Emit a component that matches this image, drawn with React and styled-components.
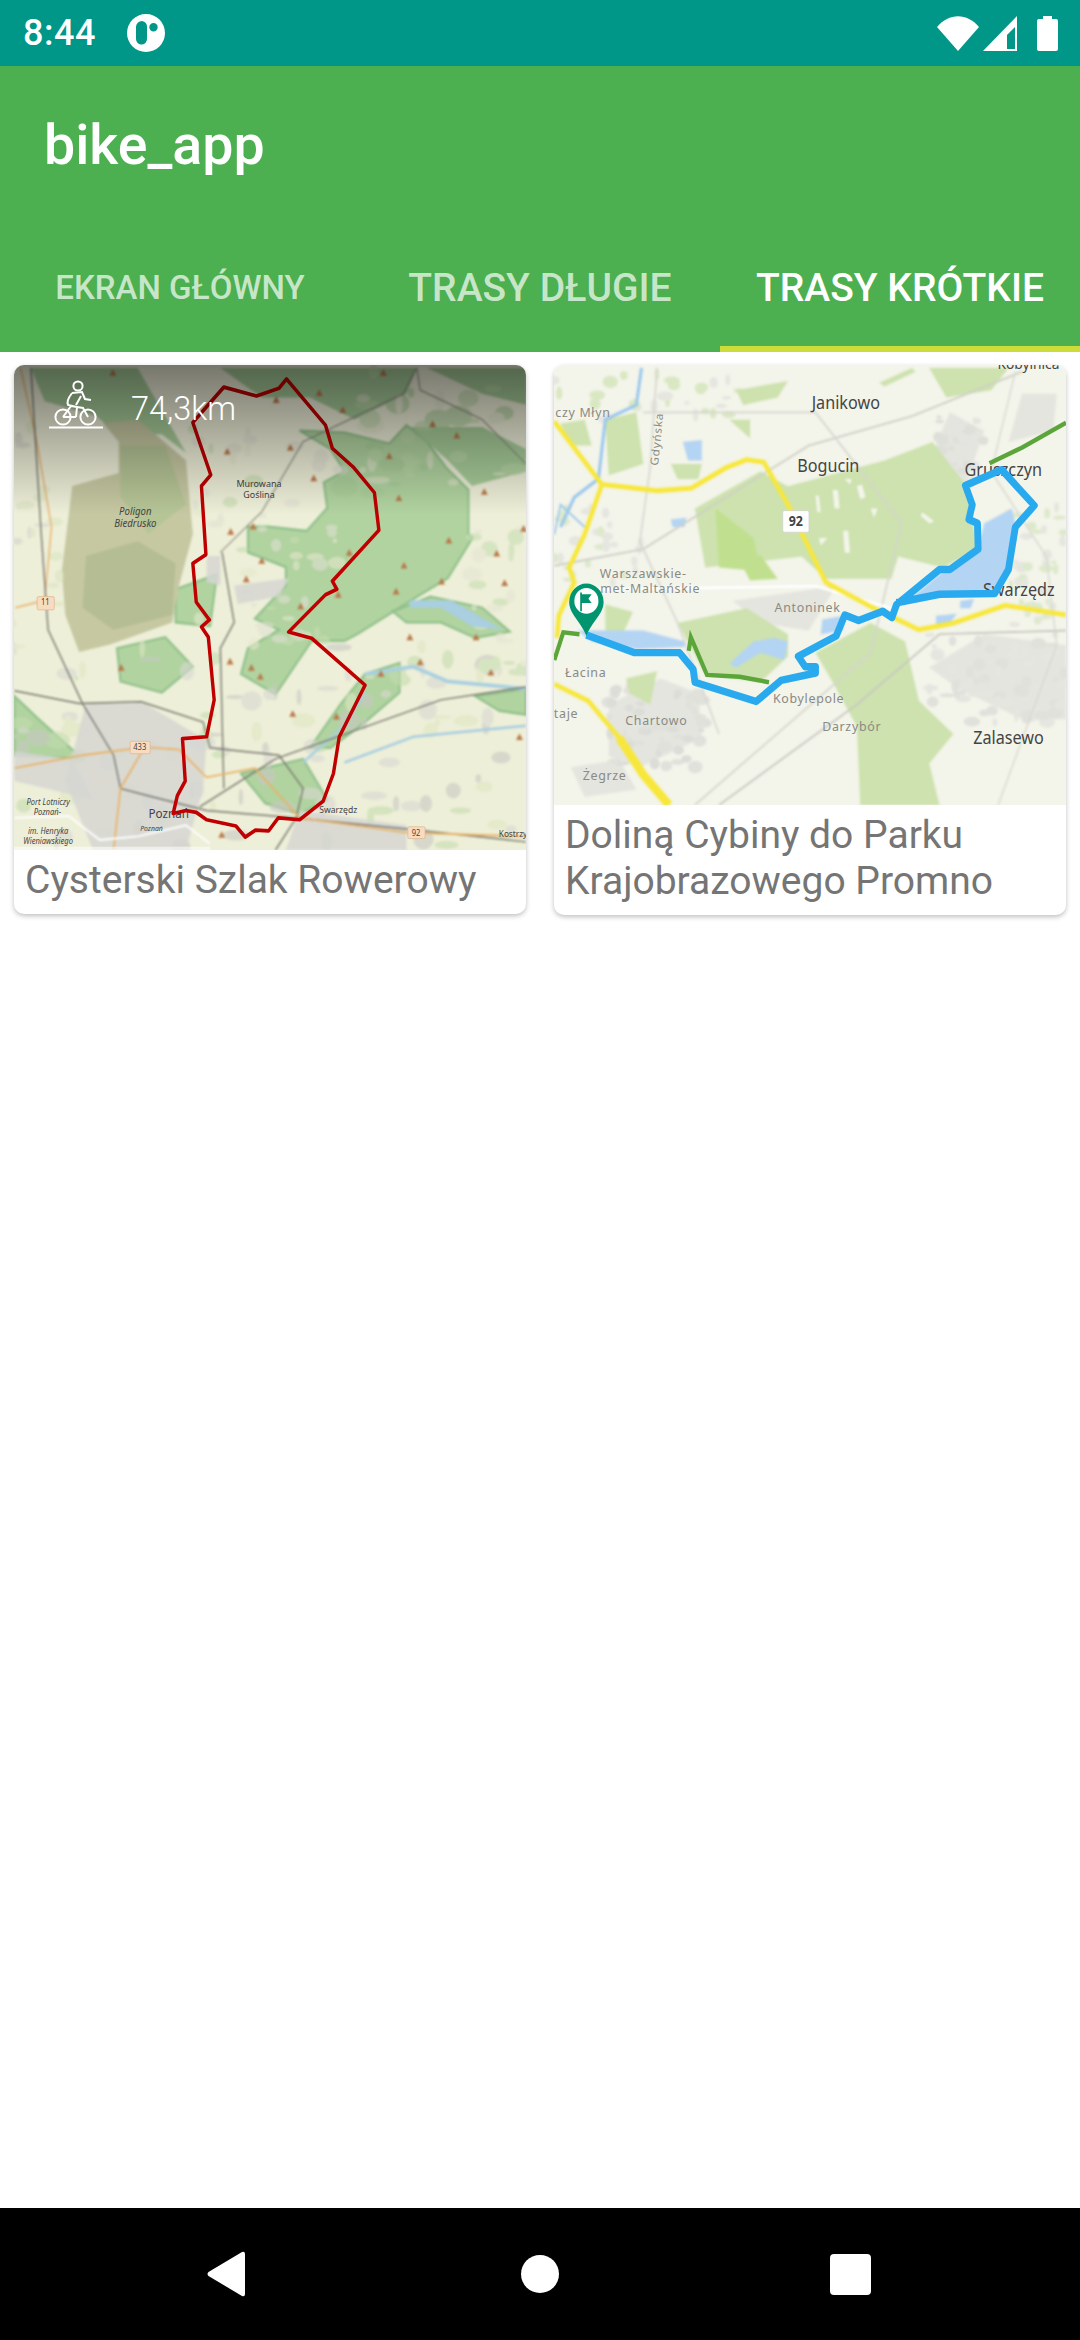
import { createGlobalStyle, styled } from "styled-components";

const GlobalStyle = createGlobalStyle`
    html, body {
        margin: 0;
        padding: 0;
        background: #fff;
        font-family: Roboto, "Liberation Sans", sans-serif;
    }
`;

const TABS = [
    { label: "EKRAN GŁÓWNY", size: 33, color: "rgba(255,255,255,0.7)" },
    { label: "TRASY DŁUGIE", size: 39, color: "rgba(255,255,255,0.7)" },
    { label: "TRASY KRÓTKIE", size: 39, color: "#fff", active: true },
];

// small blobs that give the maps their mottled look
function scatter(seed, count, [x0, y0, x1, y1], colors, maxSize) {
    let s = seed;
    const next = () => {
        s = (s * 16807) % 2147483647;
        return s / 2147483647;
    };
    return Array.from({ length: count }, (_, i) => ({
        id: i,
        cx: x0 + next() * (x1 - x0),
        cy: y0 + next() * (y1 - y0),
        rx: 6 + next() * maxSize,
        ry: 5 + next() * maxSize * 0.7,
        fill: colors[Math.floor(next() * colors.length)],
    }));
}

const BLOBS_1 = [
    ...scatter(11, 110, [41, 800, 1527, 1357], ["#c3dcae", "#d8d8d2", "#dfe6c4", "#c9c9c4"], 32),
    ...scatter(23, 50, [560, 200, 1000, 800], ["#c5ddb0", "#dfe0d2", "#e6e8cc"], 22),
    ...scatter(37, 40, [1000, 60, 1527, 420], ["#bcd8a8", "#e2e4cc", "#a9cd98"], 34),
    ...scatter(41, 26, [1370, 420, 1527, 900], ["#c6deb2", "#e4e4d4"], 24),
    ...scatter(53, 18, [41, 200, 180, 760], ["#dbe4c2", "#d3d3cc"], 20),
];
const BLOBS_2 = [
    ...scatter(7, 70, [1130, 770, 1527, 1010], ["#e6e6e1", "#e1e1dc"], 18),
    ...scatter(17, 50, [200, 900, 480, 1130], ["#e1e1dc", "#dcdcd8"], 18),
    ...scatter(29, 50, [1140, 170, 1290, 380], ["#e4e4e0", "#dfdfda"], 14),
    ...scatter(31, 40, [1360, 420, 1527, 760], ["#e6e6e0", "#dde9cb"], 16),
    ...scatter(43, 30, [42, 420, 300, 640], ["#e6e6e0", "#dde9cb"], 16),
    ...scatter(47, 30, [42, 60, 600, 190], ["#e6e6e0", "#d9e8c2"], 18),
];

const FORESTS_1 = [
    "720,480 780,480 890,492 950,430 940,360 1000,330 960,270 870,220 1000,225 1130,255 1180,205 1240,250 1295,320 1360,380 1360,500 1372,510 1300,620 1220,665 1040,770 1000,790 905,790 800,935 700,880 720,810 810,760 740,730 830,640 830,590 720,550",
    "1140,710 1250,670 1400,700 1480,765 1380,782 1280,740 1180,740",
    "1060,880 1160,850 1160,930 1060,1010 960,1080 900,1080 990,960",
    "42,940 110,1000 240,1110 42,1100",
    "1380,940 1527,920 1527,990 1450,980",
    "700,1150 880,1110 950,1220 870,1260 770,1230",
    "510,650 630,610 610,750 510,740",
    "340,810 480,780 560,860 470,930 350,900",
];
const DARK_1 = [
    "90,50 400,50 540,280 470,230 340,230 280,180 130,140",
    "640,50 1210,50 1180,120 1030,190 900,130 760,130",
    "1190,210 1400,210 1527,270 1527,330 1370,370 1300,300",
    "1240,50 1527,50 1527,150 1400,120",
];
const TOWN_1 = [
    "250,960 420,960 600,1060 590,1190 540,1357 270,1357 190,1170",
    "680,640 840,620 810,670 690,690",
    "600,560 640,560 640,640 600,630",
    "42,1090 210,1110 270,1220 42,1170",
    "870,1250 1180,1290 1180,1357 830,1357",
];
const ROUTE_1 = "560,198 650,102 745,126 810,105 832,80 945,205 965,268 1025,318 1087,388 1100,490 965,628 978,650 945,665 838,766 905,783 1060,910 985,1050 968,1150 938,1225 870,1275 808,1270 780,1305 742,1303 712,1322 685,1292 600,1275 570,1255 540,1250 503,1258 515,1210 538,1170 530,1055 600,1050 622,950 605,780 585,752 608,733 570,685 560,580 598,556 585,370 612,340";
const PEAKS_1 = [
    [328, 62], [802, 136], [927, 117], [995, 163], [1113, 62], [1256, 201], [1326, 232], [660, 276], [843, 265], [1130, 288],
    [911, 348], [1158, 402], [1406, 385], [670, 493], [735, 479], [1303, 517], [1520, 485], [1014, 550], [760, 572], [1173, 585],
    [1442, 552], [715, 622], [1282, 628], [1150, 655], [982, 664], [1465, 632], [873, 695], [1190, 779], [1382, 779], [668, 845],
    [1220, 847], [730, 862], [756, 886], [1106, 878], [1425, 875], [352, 862], [850, 987], [977, 994], [1508, 1050], [644, 1315],
];

const GREENS_2 = [
    "450,430 640,330 720,370 1000,300 1140,250 1240,370 1270,540 1170,590 1040,560 1020,620 830,620 760,560 480,590",
    "800,820 960,740 1060,790 1100,950 1200,1040 1130,1120 1160,1232 930,1232 920,1020 850,900",
    "400,740 600,700 720,770 720,830 640,900 480,880",
    "190,190 280,170 300,310 200,340",
    "1130,50 1360,50 1310,110 1180,130",
    "570,110 720,85 690,130 590,150",
    "985,90 1080,50 1090,60 1000,100",
    "380,310 470,310 460,350 400,350",
    "190,690 270,710 240,770 190,760",
    "550,190 610,190 610,240",
    "250,890 340,870 320,960 260,930",
    "60,200 130,190 150,260 90,260",
];
const CLEARINGS_2 = [
    "800,395 810,395 815,440 805,440",
    "850,380 865,380 870,430 855,430",
    "920,370 935,365 945,400 930,405",
    "880,490 895,490 900,550 885,550",
    "810,510 835,510 815,530",
    "1110,440 1145,465 1130,470 1105,450",
    "960,430 980,430 970,455",
    "885,350 905,350 900,365",
];
const LAKES_2 = [
    "1290,470 1370,430 1380,470 1360,590 1320,650 1080,670 1170,600 1270,540",
    "70,730 110,760 300,760 420,790 420,805 280,810 150,790",
    "415,250 470,245 470,300 430,300",
    "550,850 620,790 680,780 720,790 710,840 640,820 570,860",
    "820,730 880,720 880,760 815,770",
    "380,460 425,455 420,480 385,480",
    "1220,680 1260,675 1250,700 1220,700",
    "1150,720 1210,715 1190,740 1150,745",
];
const YELLOWS_2 = [
    "42,195 180,365 130,500 85,590 100,630 55,720 50,780",
    "180,365 340,382 440,375 540,320 600,298 650,305 720,420 830,630 970,700 1100,758 1200,740 1350,692 1527,718",
    "42,905 140,950 230,1050 300,1150 375,1232",
];
const TOWN_2 = [
    "1130,300 1190,170 1290,220 1230,380",
    "1130,860 1290,770 1527,800 1527,1000 1400,1000 1220,920",
    "200,960 350,890 460,930 470,1050 290,1130 200,1100",
    "90,1130 230,1110 280,1190 130,1210",
    "560,680 860,640 780,760 640,740",
    "1400,120 1500,120 1490,220 1360,250",
];
const ROUTE_2 = "135,772 275,820 405,820 445,865 450,900 628,952 700,895 800,875 800,858 770,858 750,830 860,775 885,718 925,733 995,708 1022,725 1035,690 1160,595 1190,595 1272,540 1270,470 1245,460 1255,420 1235,368 1340,325 1435,422 1380,480 1360,595 1320,660 1160,662 1035,685";
const DIM_ROUTE_2 = "M42,840 68,765 115,770 M432,815 438,778 485,880 580,885 665,900 M1305,308 1400,265 1527,198";

const StatusIcon = styled.svg`
    display: block;
    fill: #fff;
    flex: none;
`;

function WifiIcon() {
    return (
        <StatusIcon width="42" height="35" viewBox="0 0 42 35">
            <path d="M0 11 C 12 -3.5 30 -3.5 42 11 L21 35 Z" />
        </StatusIcon>
    );
}

function SignalIcon() {
    return (
        <StatusIcon width="34" height="35" viewBox="0 0 34 35">
            <path fillRule="evenodd" d="M34 0 V35 H0 Z M32 11 L24 19 V33 H32 Z" />
        </StatusIcon>
    );
}

function BatteryIcon() {
    return (
        <StatusIcon width="21" height="35" viewBox="0 0 21 35">
            <path d="M6 0 H15 V3 H19 Q21 3 21 5 V33 Q21 35 19 35 H2 Q0 35 0 33 V5 Q0 3 2 3 H6 Z" />
        </StatusIcon>
    );
}

function BikeIcon() {
    return (
        <BikeSvg width="54" height="49" viewBox="0 0 54 49">
            <circle cx="29" cy="6" r="4.6" />
            <circle cx="14" cy="37" r="7.6" />
            <circle cx="39" cy="37" r="7.6" />
            <path d="M23 13 L33 12 L36 19 L42 20 M23 13 Q17 21 19 25 L28 27 L27 37 M32 16 L27 25 M14 37 L22 26 L34 28 L39 37 M14 37 H27" />
            <rect className="ground" x="0" y="46.5" width="54" height="2" />
        </BikeSvg>
    );
}

function PeakMark({ x, y }) {
    return <Peak points={`${x},${y - 9} ${x + 10},${y + 9} ${x - 10},${y + 9}`} />;
}

function LongRouteMap() {
    return (
        <MapSvg $height={485} viewBox="41 42 1486 1315" preserveAspectRatio="none">
            <rect x="41" y="42" width="1486" height="1315" fill="#eeefd8" />
            <BlurLayer>
                {FORESTS_1.map((p, i) => <polygon key={i} points={p} fill="#b1d3a0" stroke="#8fc08a" strokeWidth="6" />)}
                {DARK_1.map((p, i) => <polygon key={i} points={p} fill="#a6cb98" />)}
                <polygon points="180,600 210,370 345,335 345,250 300,200 400,190 540,300 560,500 520,640 500,740 320,800 230,820 190,720" fill="#c6c8a2" />
                <polygon points="250,560 400,520 510,580 500,720 330,760 240,700" fill="#b5bd94" />
                <polygon points="350,260 480,260 540,420 430,500 350,400" fill="#b6c596" />
                <BlobGroup>
                    {BLOBS_1.map((b) => <ellipse key={b.id} cx={b.cx} cy={b.cy} rx={b.rx} ry={b.ry} fill={b.fill} />)}
                </BlobGroup>
                {TOWN_1.map((p, i) => <polygon key={i} points={p} fill="#d6d6d2" opacity="0.85" />)}
                <polygon points="1190,680 1310,680 1460,760 1370,750 1280,700 1190,700" fill="#a9cfe0" />
                <polyline points="1060,880 1200,860 1300,900 1527,920" fill="none" stroke="#a9cfe0" strokeWidth="10" />
                <polyline points="880,1120 1000,1020 1060,930" fill="none" stroke="#a9cfe0" strokeWidth="7" />
                <polyline points="1000,1120 1200,1050 1527,1020" fill="none" stroke="#a9cfe0" strokeWidth="7" />
                <polyline points="60,50 105,240 150,480 130,680 45,700" fill="none" stroke="#eab06c" strokeWidth="4" />
                <polyline points="90,50 120,500 140,760 240,960 330,1100 350,1190 430,1210 600,1250 860,1270 1180,1300 1527,1335" fill="none" stroke="#77776f" strokeWidth="4" />
                <polyline points="42,925 230,960 410,955 590,1010 610,1080 810,1100 880,1190 860,1270 800,1357" fill="none" stroke="#77776f" strokeWidth="4" />
                <polyline points="580,1240 800,1110 1280,950 1527,915" fill="none" stroke="#77776f" strokeWidth="4" />
                <polyline points="645,550 680,740 640,810 650,1190" fill="none" stroke="#77776f" strokeWidth="4" />
                <polyline points="640,550 760,440 880,250 1170,120 1210,50" fill="none" stroke="#88887f" strokeWidth="3" />
                <polyline points="1210,50 1220,110 1400,190 1527,310" fill="none" stroke="#88887f" strokeWidth="3" />
                <polyline points="42,1135 240,1100 420,1078 520,1085 600,1160 740,1135 870,1270 1180,1310 1527,1320" fill="none" stroke="#e9b266" strokeWidth="5" />
                <polyline points="330,1357 350,1190 420,1078" fill="none" stroke="#e9b266" strokeWidth="5" />
                <polyline points="42,1270 200,1265 290,1330 400,1320 540,1290 610,1340" fill="none" stroke="#fff" strokeWidth="5" />
                {PEAKS_1.map(([x, y]) => <PeakMark key={`${x}-${y}`} x={x} y={y} />)}
            </BlurLayer>
            <RoadShield x="108" y="670" width="50" height="36" rx="4" />
            <RoadShield x="378" y="1062" width="58" height="34" rx="4" />
            <RoadShield x="1184" y="1294" width="50" height="32" rx="4" />
            <MapLabel x="132" y="694" fontSize="22" textAnchor="middle">11</MapLabel>
            <MapLabel x="406" y="1087" fontSize="22" textAnchor="middle">433</MapLabel>
            <MapLabel x="1208" y="1318" fontSize="22" textAnchor="middle">92</MapLabel>
            <MapLabel x="752" y="372" fontSize="26" textAnchor="middle">Murowana</MapLabel>
            <MapLabel x="752" y="403" fontSize="26" textAnchor="middle">Goślina</MapLabel>
            <MapLabel x="393" y="450" fontSize="28" textAnchor="middle" fill="#a03a50" fontStyle="italic">Poligon</MapLabel>
            <MapLabel x="393" y="482" fontSize="28" textAnchor="middle" fill="#a03a50" fontStyle="italic">Biedrusko</MapLabel>
            <MapLabel x="140" y="1236" fontSize="22" textAnchor="middle" fill="#7a62b0" fontStyle="italic">Port Lotniczy</MapLabel>
            <MapLabel x="138" y="1262" fontSize="22" textAnchor="middle" fill="#7a62b0" fontStyle="italic">Poznań-</MapLabel>
            <MapLabel x="140" y="1314" fontSize="22" textAnchor="middle" fill="#7a62b0" fontStyle="italic">im. Henryka</MapLabel>
            <MapLabel x="140" y="1340" fontSize="22" textAnchor="middle" fill="#7a62b0" fontStyle="italic">Wieniawskiego</MapLabel>
            <MapLabel x="490" y="1270" fontSize="34" textAnchor="middle">Poznań</MapLabel>
            <MapLabel x="440" y="1305" fontSize="20" textAnchor="middle" fill="#7a62b0" fontStyle="italic">Poznań</MapLabel>
            <MapLabel x="982" y="1258" fontSize="25" textAnchor="middle">Swarzędz</MapLabel>
            <MapLabel x="1448" y="1322" fontSize="24">Kostrzy</MapLabel>
            <polygon points={ROUTE_1} fill="none" stroke="#c00000" strokeWidth="10" strokeLinejoin="round" />
            <rect x="41" y="1348" width="570" height="9" fill="#fff" opacity="0.55" />
        </MapSvg>
    );
}

function ShortRouteMap() {
    return (
        <MapSvg $height={440} viewBox="41 42 1486 1190" preserveAspectRatio="none">
            <rect x="41" y="42" width="1486" height="1190" fill="#f3f4ea" />
            <BlurLayer>
                {TOWN_2.map((p, i) => <polygon key={i} points={p} fill="#e4e5de" />)}
                {BLOBS_2.map((b) => <ellipse key={b.id} cx={b.cx} cy={b.cy} rx={b.rx} ry={b.ry} fill={b.fill} />)}
                {GREENS_2.map((p, i) => <polygon key={i} points={p} fill="#cde2ae" />)}
                <polygon points="510,430 620,510 640,600 520,590" fill="#c0e08f" />
                <polygon points="590,590 640,555 690,620 610,625" fill="#c0e08f" />
                {CLEARINGS_2.map((p, i) => <polygon key={i} points={p} fill="#f4f5ec" />)}
                {LAKES_2.map((p, i) => <polygon key={i} points={p} fill="#b4d4f3" />)}
                <polyline points="295,50 280,150 190,190 170,350 100,400 60,480" fill="none" stroke="#9cc8ee" strokeWidth="9" />
                <polyline points="42,500 60,420 130,480" fill="none" stroke="#9cc8ee" strokeWidth="5" />
                <polyline points="42,585 300,540 780,260 1080,180 1400,60" fill="none" stroke="#cfcfc7" strokeWidth="5" />
                <polyline points="300,170 800,170 1050,470 960,820 450,1232" fill="none" stroke="#d6d6cf" strokeWidth="5" />
                <polyline points="100,650 800,640 1020,700" fill="none" stroke="#fff" strokeWidth="7" />
                <polyline points="340,50 320,320 290,520 400,740 520,1040" fill="none" stroke="#d8d8d1" strokeWidth="5" />
                <polyline points="1527,760 1160,770 920,960 520,1232" fill="none" stroke="#c9c9c2" strokeWidth="5" />
                <polyline points="1380,60 1310,330 1470,560 1500,800 1330,1232" fill="none" stroke="#d8d8d1" strokeWidth="4" />
                {YELLOWS_2.map((p, i) => <polyline key={i} points={p} fill="none" stroke="#f7e73b" strokeWidth="13" />)}
                <polyline points="230,1050 300,1150 375,1232" fill="none" stroke="#f7e73b" strokeWidth="24" />
            </BlurLayer>
            <MapLabel x="888" y="160" fontSize="47" textAnchor="middle" fill="#3d3d3d">Janikowo</MapLabel>
            <MapLabel x="837" y="331" fontSize="47" textAnchor="middle" fill="#3d3d3d">Bogucin</MapLabel>
            <MapLabel x="1345" y="343" fontSize="47" textAnchor="middle" fill="#3d3d3d">Gruszczyn</MapLabel>
            <MapLabel x="1390" y="667" fontSize="47" textAnchor="middle" fill="#3d3d3d">Swarzędz</MapLabel>
            <MapLabel x="1360" y="1066" fontSize="47" textAnchor="middle" fill="#3d3d3d">Zalasewo</MapLabel>
            <MapLabel x="1418" y="52" fontSize="40" textAnchor="middle" fill="#3d3d3d">Kobylnica</MapLabel>
            <SoftLabel x="125" y="182" fontSize="36" textAnchor="middle">czy Młyn</SoftLabel>
            <SoftLabel x="300" y="617" fontSize="36" textAnchor="middle">Warszawskie-</SoftLabel>
            <SoftLabel x="320" y="659" fontSize="36" textAnchor="middle">met-Maltańskie</SoftLabel>
            <SoftLabel x="777" y="710" fontSize="36" textAnchor="middle">Antoninek</SoftLabel>
            <SoftLabel x="133" y="887" fontSize="36" textAnchor="middle">Łacina</SoftLabel>
            <SoftLabel x="780" y="957" fontSize="36" textAnchor="middle">Kobylepole</SoftLabel>
            <SoftLabel x="338" y="1017" fontSize="36" textAnchor="middle">Chartowo</SoftLabel>
            <SoftLabel x="905" y="1032" fontSize="36" textAnchor="middle">Darzybór</SoftLabel>
            <SoftLabel x="188" y="1164" fontSize="36" textAnchor="middle">Żegrze</SoftLabel>
            <SoftLabel x="76" y="997" fontSize="36" textAnchor="middle">taje</SoftLabel>
            <SoftLabel x="0" y="0" fontSize="32" transform="translate(343 315) rotate(-84)">Gdyńska</SoftLabel>
            <path d={DIM_ROUTE_2} fill="none" stroke="#5ba53a" strokeWidth="12" />
            <polyline points={ROUTE_2} fill="none" stroke="#29aaef" strokeWidth="20" strokeLinejoin="round" />
            <rect x="705" y="436" width="76" height="58" rx="4" fill="#fff" stroke="#cfcfcf" strokeWidth="2" />
            <MapLabel x="743" y="478" fontSize="36" fontWeight="700" textAnchor="middle" fill="#222">92</MapLabel>
            <path d="M135 774 C 118 735 85 715 85 683 A 50 50 0 0 1 185 683 C 185 715 152 735 135 774 Z" fill="#00956f" />
            <circle cx="135" cy="680" r="35" fill="#fff" />
            <path d="M117 657 H122 V662 H150 L141 674 L150 686 H122 V708 H117 Z" fill="#00956f" />
        </MapSvg>
    );
}

function App() {
    return (
        <Screen>
            <GlobalStyle />
            <StatusBar>
                <StatusLeft>
                    <Clock>8:44</Clock>
                    <StatusIcon width="38" height="38" viewBox="0 0 38 38">
                        <path fillRule="evenodd" d="M19 0 A19 19 0 1 1 19 38 A19 19 0 1 1 19 0 Z M15 7 A6 6 0 0 0 9 13 V25 A5.5 5.5 0 0 0 20 25 V13 A6 6 0 0 0 15 7 Z M26.5 9 A4.2 4.2 0 1 0 26.5 17.4 A4.2 4.2 0 1 0 26.5 9 Z" />
                    </StatusIcon>
                </StatusLeft>
                <StatusRight>
                    <WifiIcon />
                    <SignalIcon />
                    <BatteryIcon />
                </StatusRight>
            </StatusBar>
            <AppBar>
                <Title>bike_app</Title>
                <TabRow>
                    {TABS.map((tab) => (
                        <Tab key={tab.label} $size={tab.size} $color={tab.color} $active={tab.active}>
                            {tab.label}
                        </Tab>
                    ))}
                </TabRow>
            </AppBar>
            <Content>
                <Card>
                    <MapFrame>
                        <LongRouteMap />
                        <MapShade />
                        <DistanceBadge>
                            <BikeIcon />
                            <Distance>74,3km</Distance>
                        </DistanceBadge>
                    </MapFrame>
                    <CardTitle>Cysterski Szlak Rowerowy</CardTitle>
                </Card>
                <Card>
                    <MapFrame>
                        <ShortRouteMap />
                    </MapFrame>
                    <CardTitle>Doliną Cybiny do Parku Krajobrazowego Promno</CardTitle>
                </Card>
            </Content>
            <NavBar>
                <svg width="38" height="46" viewBox="0 0 38 46" fill="#fff">
                    <path d="M38 3 V43 Q38 46 35 45 L1.5 25 Q-0.5 23 1.5 21 L35 1 Q38 0 38 3 Z" />
                </svg>
                <HomeDot />
                <RecentSquare />
            </NavBar>
        </Screen>
    );
}

const Screen = styled.div`
    width: 1080px;
    height: 2340px;
    display: flex;
    flex-direction: column;
    overflow: hidden;
    background: #fff;
`;

const StatusBar = styled.div`
    height: 66px;
    flex: none;
    padding: 0 22px 0 23px;
    box-sizing: border-box;
    display: flex;
    align-items: center;
    justify-content: space-between;
    background: #009688;
`;

const StatusLeft = styled.div`
    display: flex;
    align-items: center;
    gap: 31px;
`;

const StatusRight = styled.div`
    display: flex;
    align-items: center;
    gap: 4px;

    svg:last-child {
        margin-left: 16px;
    }
`;

const Clock = styled.span`
    font-size: 36px;
    font-weight: 500;
    color: #fff;
    letter-spacing: 0.5px;
`;

const AppBar = styled.header`
    height: 286px;
    flex: none;
    box-sizing: border-box;
    display: flex;
    flex-direction: column;
    justify-content: space-between;
    background: #4caf50;
`;

const Title = styled.h1`
    margin: 0;
    padding: 50px 0 0 44px;
    font-size: 55.5px;
    line-height: 60px;
    font-weight: 500;
    color: #fff;
`;

const TabRow = styled.nav`
    display: flex;
    height: 126px;
`;

const Tab = styled.div`
    flex: 1;
    box-sizing: border-box;
    display: flex;
    align-items: center;
    justify-content: center;
    padding-top: 3px;
    font-size: ${(p) => p.$size}px;
    font-weight: 500;
    color: ${(p) => p.$color};
    border-bottom: 6px solid ${(p) => (p.$active ? "#cddc39" : "transparent")};
`;

const Content = styled.main`
    flex: 1;
    padding: 13px 14px;
    display: grid;
    grid-template-columns: 1fr 1fr;
    gap: 28px;
    align-items: start;
`;

const Card = styled.article`
    background: #fff;
    border-radius: 10px;
    overflow: hidden;
    box-shadow: 0 2px 5px rgba(0, 0, 0, 0.25);
`;

const MapFrame = styled.div`
    position: relative;
    line-height: 0;
`;

const MapSvg = styled.svg`
    display: block;
    width: 100%;
    height: ${(p) => p.$height}px;
`;

const BlurLayer = styled.g`
    filter: blur(3px);
`;

const BlobGroup = styled.g`
    opacity: 0.6;
`;

const MapLabel = styled.text`
    font-family: "Noto Sans", Roboto, sans-serif;
    fill: #444;
`;

const SoftLabel = styled(MapLabel)`
    fill: #8a8a84;
    letter-spacing: 2px;
`;

const RoadShield = styled.rect`
    fill: #f9dcc0;
    stroke: #dcb48e;
    stroke-width: 2;
`;

const Peak = styled.polygon`
    fill: #b9784a;
`;

const MapShade = styled.div`
    position: absolute;
    inset: 0 0 auto 0;
    height: 150px;
    background: linear-gradient(to bottom, rgba(0, 0, 0, 0.5), rgba(0, 0, 0, 0));
`;

const DistanceBadge = styled.div`
    position: absolute;
    top: 15px;
    left: 35px;
    display: flex;
    align-items: flex-start;
    gap: 28px;
`;

const BikeSvg = styled.svg`
    display: block;
    fill: none;
    stroke: #fff;
    stroke-width: 2;

    .ground {
        fill: #fff;
        stroke: none;
    }
`;

const Distance = styled.span`
    font-size: 32.5px;
    line-height: 58px;
    font-weight: 300;
    color: #fff;
`;

const CardTitle = styled.h2`
    margin: 0;
    padding: 7px 11px 11px;
    font-size: 39px;
    line-height: 46px;
    font-weight: 400;
    color: #757575;
`;

const NavBar = styled.footer`
    height: 132px;
    flex: none;
    padding-right: 2px;
    display: flex;
    align-items: center;
    justify-content: center;
    background: #000;
`;

const HomeDot = styled.div`
    width: 38px;
    height: 38px;
    margin: 0 271px 0 276px;
    border-radius: 50%;
    background: #fff;
`;

const RecentSquare = styled.div`
    width: 41px;
    height: 41px;
    border-radius: 4px;
    background: #fff;
`;

export default App;
